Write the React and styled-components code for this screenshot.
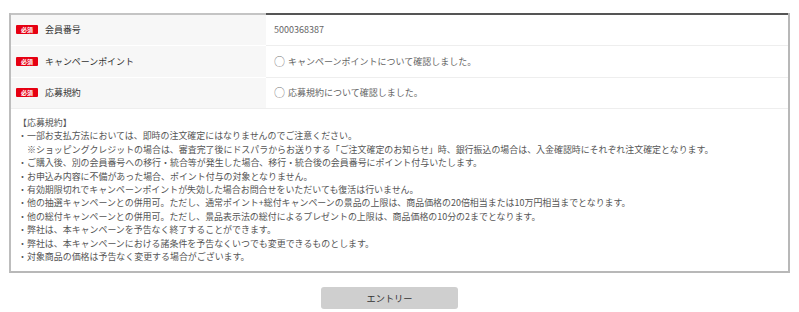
import React from "react";
import styled, { createGlobalStyle } from "styled-components";

const Global = createGlobalStyle`
  html, body { margin: 0; padding: 0; background: #fff; }
  body { font-family: "Noto Sans CJK JP", "Noto Sans", sans-serif; }
`;

const Page = styled.div`
  padding: 13px 9px 0 9px;
`;

const Table = styled.div`
  width: 781px;
  display: grid;
  grid-template-columns: 255px 1fr;
  border-left: 2px solid #bdbdbd;
  border-right: 2px solid #b8b8b8;
  border-bottom: 2px solid #b8b8b8;
  box-sizing: border-box;
`;

const HeadCell = styled.div`
  height: 32px;
  box-sizing: border-box;
  background: #f7f7f7;
  display: flex;
  align-items: center;
  padding-left: 5px;
  padding-bottom: 1px;
  gap: 7px;
  border-top: ${(p) => (p.$first ? "2px solid #c4c4c4" : "1px solid #fff")};
  border-bottom: ${(p) => (p.$last ? "1px solid #eee" : "0")};
`;

const ValueCell = styled.div`
  height: 32px;
  box-sizing: border-box;
  display: flex;
  align-items: center;
  padding-left: 8px;
  padding-bottom: 1px;
  font-size: 9px;
  color: #666;
  border-top: ${(p) => (p.$first ? "2px solid #555" : "1px solid #eee")};
  border-bottom: ${(p) => (p.$last ? "1px solid #eee" : "0")};
`;

const Circle = styled.span`
  font-size: 11px;
  line-height: 1;
  margin-right: 3px;
  color: #777;
`;

const Badge = styled.span`
  width: 22px;
  height: 9px;
  background: #e60012;
  color: #fff;
  font-size: 6px;
  font-weight: 700;
  line-height: 9px;
  text-align: center;
  border-radius: 1px;
  letter-spacing: 0;
`;

const Label = styled.span`
  font-size: 8.95px;
  color: #333;
`;

const Terms = styled.div`
  grid-column: 1 / -1;
  padding: 7px 0 8px 7px;
  font-size: 8.95px;
  line-height: 13.4px;
  color: #555;
`;

const Line = styled.div`
  white-space: nowrap;
  padding-left: ${(p) => (p.$indent ? "9px" : "0")};
`;

const ButtonRow = styled.div`
  display: flex;
  justify-content: center;
  width: 781px;
  padding: 14px 20px 0 0;
  box-sizing: border-box;
`;

const EntryButton = styled.button`
  width: 137px;
  height: 22px;
  border: 0;
  border-radius: 3px;
  background: #cfcfcf;
  color: #333;
  font-family: "Noto Sans CJK JP", sans-serif;
  font-size: 9.2px;
  padding: 0;
`;

const rows = [
  { label: "会員番号", value: "5000368387" },
  { label: "キャンペーンポイント", value: "キャンペーンポイントについて確認しました。", check: true },
  { label: "応募規約", value: "応募規約について確認しました。", check: true },
];

const terms = [
  { t: "【応募規約】" },
  { t: "・一部お支払方法においては、即時の注文確定にはなりませんのでご注意ください。" },
  { t: "※ショッピングクレジットの場合は、審査完了後にドスパラからお送りする「ご注文確定のお知らせ」時、銀行振込の場合は、入金確認時にそれぞれ注文確定となります。", indent: true },
  { t: "・ご購入後、別の会員番号への移行・統合等が発生した場合、移行・統合後の会員番号にポイント付与いたします。" },
  { t: "・お申込み内容に不備があった場合、ポイント付与の対象となりません。" },
  { t: "・有効期限切れでキャンペーンポイントが失効した場合お問合せをいただいても復活は行いません。" },
  { t: "・他の抽選キャンペーンとの併用可。ただし、通常ポイント+総付キャンペーンの景品の上限は、商品価格の20倍相当または10万円相当までとなります。" },
  { t: "・他の総付キャンペーンとの併用可。ただし、景品表示法の総付によるプレゼントの上限は、商品価格の10分の2までとなります。" },
  { t: "・弊社は、本キャンペーンを予告なく終了することができます。" },
  { t: "・弊社は、本キャンペーンにおける諸条件を予告なくいつでも変更できるものとします。" },
  { t: "・対象商品の価格は予告なく変更する場合がございます。" },
];

export default function App() {
  return (
    <>
      <Global />
      <Page>
        <Table>
          {rows.map((r, i) => (
            <React.Fragment key={r.label}>
              <HeadCell $first={i === 0} $last={i === rows.length - 1}>
                <Badge>必須</Badge>
                <Label>{r.label}</Label>
              </HeadCell>
              <ValueCell $first={i === 0} $last={i === rows.length - 1}>
                {r.check && <Circle>○</Circle>}
                {r.value}
              </ValueCell>
            </React.Fragment>
          ))}
          <Terms>
            {terms.map((l, i) => (
              <Line key={i} $indent={l.indent}>
                {l.t}
              </Line>
            ))}
          </Terms>
        </Table>
        <ButtonRow>
          <EntryButton>エントリー</EntryButton>
        </ButtonRow>
      </Page>
    </>
  );
}
